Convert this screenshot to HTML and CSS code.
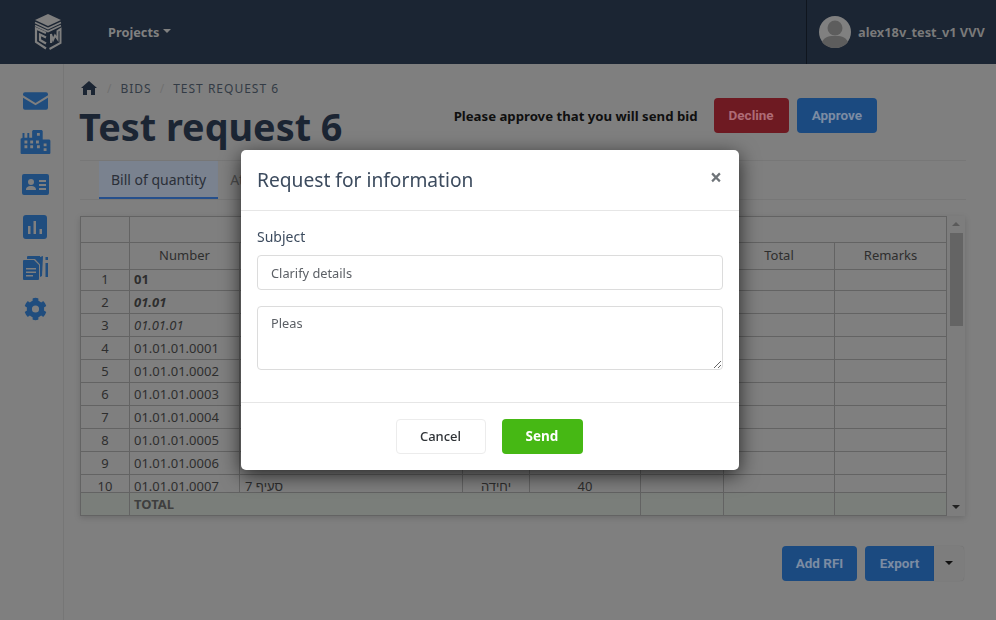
FILE: index.html
```html
<!DOCTYPE html>
<html lang="en">
<head>
    <meta charset="UTF-8">
    <title>Test request 6</title>
    <link rel="stylesheet" href="styles.css">
</head>
<body>
    <header class="top-bar">
        <div class="brand">
            <svg width="30" height="38" viewBox="0 0 30 38" fill="none">
                <path d="M15 1 L28 7 L15 13 L2 7 Z" fill="#7f7f7f"/>
                <path d="M2 9.500 L15 15.500 L28 9.500 M2 12.500 L15 18.500 L28 12.500" stroke="#7f7f7f" stroke-width="1.600"/>
                <path d="M13 20 L3 15.500 V29 L13 35.500 M13 24.500 L7 21.500 V27 L13 30.500" stroke="#7f7f7f" stroke-width="2.200"/>
                <path d="M16.500 36 L27.500 30 V16 L24.500 18 V26 L22 22.500 L20 27 L18 21 V30" stroke="#7f7f7f" stroke-width="2"/>
            </svg>
        </div>
        <a class="nav-link">Projects<span class="caret"></span></a>
        <div class="user-box">
            <svg class="avatar" width="32" height="32" viewBox="0 0 32 32">
                <circle cx="16" cy="16" r="16" fill="#808080"/>
                <circle cx="16" cy="12" r="7.500" fill="#5d5d5d"/>
                <path d="M3 26 C6 20 11 20 16 20 C21 20 26 20 29 26 C26 30 21 32 16 32 C11 32 6 30 3 26 Z" fill="#5d5d5d"/>
            </svg>
            <span class="user-name">alex18v_test_v1 VVV</span>
        </div>
    </header>

    <div class="main-wrap">
        <aside class="side-bar">
            <svg width="25" height="18" viewBox="0 0 26 18"><path d="M2 0H24A2 2 0 0 1 26 2V3L13 11 0 3V2A2 2 0 0 1 2 0ZM0 5.500L13 13.500 26 5.500V16A2 2 0 0 1 24 18H2A2 2 0 0 1 0 16Z" fill="#204d7e"/></svg>
            <svg width="31" height="24" viewBox="0 0 31 25"><path fill-rule="evenodd" d="M1 25A1 1 0 0 1 0 24V9L2 8V3H4V8H7V3H9V8H12V1L13 0H22L23 1V10H30L31 11V24A1 1 0 0 1 30 25ZM4 11V14H7V11ZM10 11V14H13V11ZM16 11V14H19V11ZM17 3V6H20V3ZM4 16V19H7V16ZM10 16V19H13V16ZM17 16V19H20V16ZM24 14V17H27V14ZM24 19V22H27V19Z" fill="#204d7e"/></svg>
            <svg width="27" height="21" viewBox="0 0 27 21"><path fill-rule="evenodd" d="M2 0H25A2 2 0 0 1 27 2V19A2 2 0 0 1 25 21H2A2 2 0 0 1 0 19V2A2 2 0 0 1 2 0ZM9 5A3 3 0 1 0 9 11 3 3 0 1 0 9 5ZM4 16H14C14 13 12 12 9 12S4 13 4 16ZM17 6V8H24V6ZM17 10V12H24V10ZM17 14V16H24V14Z" fill="#204d7e"/></svg>
            <svg width="24" height="24" viewBox="0 0 24 24"><path fill-rule="evenodd" d="M3 0H21A3 3 0 0 1 24 3V21A3 3 0 0 1 21 24H3A3 3 0 0 1 0 21V3A3 3 0 0 1 3 0ZM5 11V19H7.500V11ZM10.500 6V19H13V6ZM16.500 14V19H19V14Z" fill="#204d7e"/></svg>
            <svg class="tight" width="25" height="24" viewBox="0 0 25 24"><path fill-rule="evenodd" d="M1 4H11L16 9V23A1 1 0 0 1 15 24H1A1 1 0 0 1 0 23V5A1 1 0 0 1 1 4ZM3 12V13.500H13V12ZM3 15.500V17H13V15.500ZM3 19V20.500H10V19Z" fill="#204d7e"/><path d="M4 3V1A1 1 0 0 1 5 0H17V20H17.500V9L12 3Z" fill="#204d7e"/><path d="M20 0L17 1V21L19 20Z" fill="#204d7e"/><path d="M22.500 1H25V4H22.500ZM22.500 7H25V21H22.500Z" fill="#204d7e"/></svg>
            <svg class="tight" width="23" height="24" viewBox="0 0 512 512"><path d="M487 316l-42-25a190 190 0 0 0 0-70l42-25c5-3 7-9 6-14-11-36-30-68-55-95-4-4-10-5-15-2l-42 24a187 187 0 0 0-61-35V26c0-6-4-11-9-12a244 244 0 0 0-110 0c-5 1-9 6-9 12v48a190 190 0 0 0-61 35L89 85c-5-3-11-2-15 2-25 27-44 59-55 95-2 5 1 11 5 14l42 25a190 190 0 0 0 0 70l-42 25c-5 3-7 9-5 14 11 36 30 68 55 95 4 4 10 5 15 2l42-24a187 187 0 0 0 61 35v48c0 6 4 11 9 12a244 244 0 0 0 110 0c5-1 9-6 9-12v-48a190 190 0 0 0 61-35l42 24c5 3 11 2 15-2 25-27 44-59 55-95 1-5-1-11-6-14zM256 336a80 80 0 1 1 0-160 80 80 0 0 1 0 160z" fill="#204d7e"/></svg>
        </aside>

        <main class="content">
            <nav class="crumbs">
                <svg class="home" width="16" height="14" viewBox="0 0 16 14"><path d="M8 0L16 7H14V14H10V9H6V14H2V7H0Z" fill="#1b2533"/></svg>
                <span class="sep">/</span><span>BIDS</span>
                <span class="sep">/</span><span>TEST REQUEST 6</span>
            </nav>
            <div class="title-row">
                <h1>Test request 6</h1>
                <div class="approve-box">
                    <strong>Please approve that you will send bid</strong>
                    <button class="btn btn-red">Decline</button>
                    <button class="btn btn-blue">Approve</button>
                </div>
            </div>

            <div class="tabs">
                <a class="tab active">Bill of quantity</a>
                <a class="tab">Attachments</a>
            </div>

            <div class="sheet">
                <div class="sheet-main">
                    <div class="sheet-head">
                        <div class="row row-top"><span></span><span class="span-all"></span></div>
                        <div class="row row-names">
                            <span></span><span class="c">Number</span><span></span><span></span><span></span><span></span><span class="c">Total</span><span class="c">Remarks</span>
                        </div>
                    </div>
                    <div class="sheet-body">
                        <div class="row first"><span class="c">1</span><span><b>01</b></span><span></span><span></span><span></span><span></span><span></span><span></span></div>
                        <div class="row"><span class="c">2</span><span><b><i>01.01</i></b></span><span></span><span></span><span></span><span></span><span></span><span></span></div>
                        <div class="row"><span class="c">3</span><span><i>01.01.01</i></span><span></span><span></span><span></span><span></span><span></span><span></span></div>
                        <div class="row"><span class="c">4</span><span>01.01.01.0001</span><span></span><span></span><span></span><span></span><span></span><span></span></div>
                        <div class="row"><span class="c">5</span><span>01.01.01.0002</span><span></span><span></span><span></span><span></span><span></span><span></span></div>
                        <div class="row"><span class="c">6</span><span>01.01.01.0003</span><span></span><span></span><span></span><span></span><span></span><span></span></div>
                        <div class="row"><span class="c">7</span><span>01.01.01.0004</span><span></span><span></span><span></span><span></span><span></span><span></span></div>
                        <div class="row"><span class="c">8</span><span>01.01.01.0005</span><span></span><span></span><span></span><span></span><span></span><span></span></div>
                        <div class="row"><span class="c">9</span><span>01.01.01.0006</span><span dir="rtl" class="rtl-cell">סעיף 6</span><span class="c">יחידה</span><span></span><span></span><span></span><span></span></div>
                        <div class="row"><span class="c">10</span><span>01.01.01.0007</span><span dir="rtl" class="rtl-cell">סעיף 7</span><span class="c">יחידה</span><span class="c">40</span><span></span><span></span><span></span></div>
                    </div>
                    <div class="row row-total"><span></span><b class="total-label">TOTAL</b><span></span><span></span><span></span></div>
                </div>
                <div class="scroll-track">
                    <span class="arrow-up"></span>
                    <span class="scroll-thumb"></span>
                    <span class="arrow-down"></span>
                </div>
            </div>

            <div class="bottom-actions">
                <button class="btn btn-blue btn-rfi">Add RFI</button>
                <div class="split">
                    <button class="btn btn-blue btn-left">Export</button>
                    <button class="btn-arrow"><span class="caret dark"></span></button>
                </div>
            </div>
        </main>
    </div>

    <div class="modal-layer">
        <div class="modal">
            <div class="modal-head">
                <h2>Request for information</h2>
                <span class="close">×</span>
            </div>
            <div class="modal-body">
                <label>Subject</label>
                <input class="field" type="text" value="Clarify details">
                <textarea class="field area">Pleas</textarea>
            </div>
            <div class="modal-foot">
                <button class="btn btn-white">Cancel</button>
                <button class="btn btn-green">Send</button>
            </div>
        </div>
    </div>
</body>
</html>
```

FILE: styles.css
```css
* {
    margin: 0;
    padding: 0;
    box-sizing: border-box;
}

html, body {
    height: 100%;
    overflow: hidden;
}

body {
    background-color: #7f7f7f;
    font-family: 'Noto Sans', sans-serif;
    font-size: 13px;
    color: #2e2e2e;
    display: flex;
    flex-direction: column;
}

.top-bar {
    height: 64px;
    background-color: #1b2533;
    display: flex;
    align-items: center;
    flex-shrink: 0;
}

.brand {
    width: 108px;
    padding-left: 33px;
    display: flex;
}

.nav-link {
    color: #808080;
    font-weight: 700;
    font-size: 12.800px;
    display: flex;
    align-items: center;
}

.caret {
    display: inline-block;
    width: 0;
    height: 0;
    margin-left: 4px;
    margin-top: -3px;
    border-left: 4px solid transparent;
    border-right: 4px solid transparent;
    border-top: 4px solid #808080;
}

.caret.dark {
    margin: 0 0 3px;
    border-top-color: #111;
}

.user-box {
    margin-left: auto;
    width: 190px;
    height: 64px;
    border-left: 1px solid #0f151e;
    padding-left: 12px;
    display: flex;
    align-items: center;
    gap: 7px;
}

.user-name {
    color: #7a7a7a;
    font-weight: 700;
    font-size: 12.800px;
    white-space: nowrap;
}

.main-wrap {
    flex: 1;
    display: flex;
    min-height: 0;
}

.side-bar {
    width: 64px;
    flex-shrink: 0;
    border-right: 1px solid #767676;
    padding: 28px 0 0 7px;
    display: flex;
    flex-direction: column;
    align-items: center;
    gap: 20px;
}

.side-bar .tight {
    margin-top: -3px;
}

.content {
    flex: 1;
    padding: 15px 30px 0 16px;
    min-width: 0;
}

.crumbs {
    display: flex;
    align-items: center;
    height: 18px;
    padding-left: 1px;
    font-size: 12px;
    letter-spacing: 1px;
    color: #333b45;
    gap: 8px;
}

.crumbs .home {
    margin-right: 2px;
}

.crumbs .sep {
    color: #707070;
}

.title-row {
    display: flex;
    align-items: flex-start;
    justify-content: space-between;
    height: 60px;
    padding-right: 89px;
}

h1 {
    font-size: 37.800px;
    line-height: 60px;
    font-weight: 700;
    color: #1b2533;
    margin-left: -1px;
}

.approve-box {
    display: flex;
    align-items: center;
    margin-top: 1px;
    gap: 8px;
}

.approve-box strong {
    font-size: 13.200px;
    color: #0f0f0f;
    margin-right: 8px;
}

.btn {
    height: 35px;
    padding: 0 15px 2px;
    border: none;
    border-radius: 4px;
    font-family: 'Roboto', sans-serif;
    font-weight: 700;
    font-size: 13.500px;
}

.btn-rfi {
    width: 75px;
    padding: 0 0 2px;
}

.btn-red {
    background-color: #6e1a22;
    color: #ae6c76;
}

.btn-blue {
    background-color: #1b4a80;
    color: #7c8ca3;
}

.tabs {
    height: 40px;
    margin-top: 3px;
    padding-left: 19px;
    border-top: 1px solid #777;
    border-bottom: 1px solid #777;
    display: flex;
}

.tab {
    padding: 0 12px;
    line-height: 37px;
    color: #4d4d4d;
    font-size: 14px;
}

.tab.active {
    background-color: #7a828f;
    color: #2a2f38;
    border-bottom: 2px solid #254f8c;
    height: 38px;
}

.sheet {
    margin-top: 16px;
    display: flex;
    height: 300px;
    width: 885px;
    box-shadow: 0 2px 6px rgba(0, 0, 0, 0.15);
}

.sheet-main {
    width: 867px;
    display: flex;
    flex-direction: column;
    border-top: 1px solid #636363;
    border-left: 1px solid #636363;
}

.row {
    display: grid;
    grid-template-columns: 49px 110px 223px 67px 111px 83px 111px 112px;
    height: 23px;
    line-height: 22px;
    flex-shrink: 0;
}

.row > * {
    border-right: 1px solid #636363;
    border-bottom: 1px solid #636363;
    padding-left: 4px;
    white-space: nowrap;
    overflow: hidden;
}

.row.first {
    height: 21px;
    line-height: 19px;
}

.row .c {
    text-align: center;
    padding-left: 0;
}

.row-top {
    height: 26px;
}

.span-all {
    grid-column: 2 / 9;
}

.row-names {
    height: 27px;
    line-height: 25px;
}

.sheet-body {
    height: 222px;
    overflow: hidden;
}

.rtl-cell {
    text-align: left;
    padding-left: 5px;
}

.row-total {
    height: 24px;
    grid-template-columns: 49px 511px 83px 111px 112px;
    background-color: #7a7e7a;
    border-top: 1px solid #636363;
}

.total-label {
    color: #3f3f3f;
}

.scroll-track {
    width: 18px;
    padding: 6px 2px 7px;
    display: flex;
    flex-direction: column;
    align-items: center;
    background-color: #7d7d7d;
}

.scroll-thumb {
    width: 13px;
    height: 93px;
    margin-top: 7px;
    background-color: #646464;
}

.arrow-up {
    border-left: 4px solid transparent;
    border-right: 4px solid transparent;
    border-bottom: 4px solid #5a5a5a;
}

.arrow-down {
    margin-top: auto;
    border-left: 4px solid transparent;
    border-right: 4px solid transparent;
    border-top: 4px solid #222;
}

.bottom-actions {
    display: flex;
    justify-content: flex-end;
    gap: 8px;
    width: 884px;
    margin-top: 30px;
}

.split {
    display: flex;
}

.btn-left {
    width: 69px;
    padding: 0 0 2px;
    border-radius: 4px 0 0 4px;
}

.btn-arrow {
    width: 30px;
    height: 35px;
    border: none;
    background-color: #7d7d7d;
    border-radius: 0 4px 4px 0;
    box-shadow: 0 0 1px rgba(0, 0, 0, 0.2);
}

/* dialog on top of the dimmed page */
.modal-layer {
    position: fixed;
    top: 150px;
    left: 241px;
}

.modal {
    width: 498px;
    height: 320px;
    background-color: #fff;
    border-radius: 5px;
    box-shadow: 0 5px 20px rgba(0, 0, 0, 0.7);
    display: flex;
    flex-direction: column;
}

.modal-head {
    height: 61px;
    padding: 0 16px 2px;
    border-bottom: 1px solid #e6e6e6;
    display: flex;
    align-items: center;
    justify-content: space-between;
}

h2 {
    font-size: 19.200px;
    font-weight: 400;
    color: #3c4b5e;
}

.close {
    font-size: 21px;
    font-weight: 700;
    color: #6f7479;
    margin-top: -4px;
    margin-right: 1px;
}

.modal-body {
    flex: 1;
    padding: 16px 16px 0;
    display: flex;
    flex-direction: column;
}

label {
    font-size: 14px;
    line-height: 20px;
    color: #3c4b5e;
    margin-bottom: 8px;
}

.field {
    width: 466px;
    height: 35px;
    border: 1px solid #dcdcdc;
    border-radius: 4px;
    padding: 0 13px;
    font-family: 'Noto Sans', sans-serif;
    font-size: 12.800px;
    color: #5c6066;
    background-color: #fff;
}

.area {
    height: 64px;
    margin-top: 16px;
    padding: 7px 13px;
    resize: vertical;
    display: block;
}

.modal-foot {
    height: 68px;
    padding-right: 2px;
    border-top: 1px solid #e6e6e6;
    display: flex;
    justify-content: center;
    align-items: center;
    gap: 16px;
}

.btn-white {
    width: 90px;
    background-color: #fff;
    border: 1px solid #ececec;
    color: #2f3337;
    font-family: 'Noto Sans', sans-serif;
    font-weight: 500;
    font-size: 13px;
}

.btn-green {
    width: 81px;
    background-color: #46b814;
    color: #fff;
    font-family: 'Noto Sans', sans-serif;
}
```
